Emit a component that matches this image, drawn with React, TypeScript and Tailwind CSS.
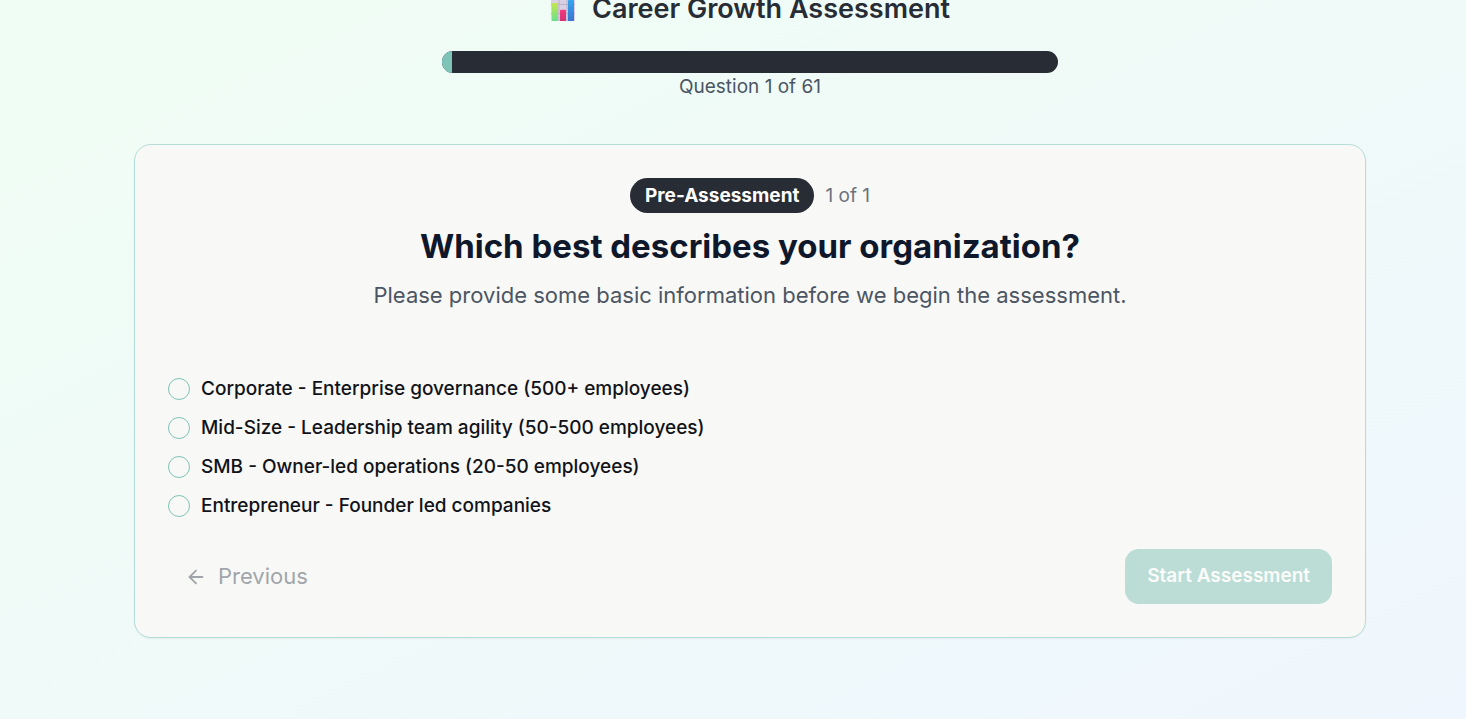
import { useState } from "react";

const total = 61;
const current = 1;

const options = [
  "Corporate - Enterprise governance (500+ employees)",
  "Mid-Size - Leadership team agility (50-500 employees)",
  "SMB - Owner-led operations (20-50 employees)",
  "Entrepreneur - Founder led companies",
];

function ChartIcon() {
  return (
    <svg viewBox="0 0 26 26" className="size-[26px] shrink-0" aria-hidden="true">
      <defs>
        <linearGradient id="green" x1="0" y1="0" x2="0" y2="1">
          <stop offset="0" stopColor="#c5e64d" />
          <stop offset="1" stopColor="#69e08d" />
        </linearGradient>
        <linearGradient id="pink" x1="0" y1="0" x2="0" y2="1">
          <stop offset="0" stopColor="#f4397d" />
          <stop offset="1" stopColor="#d43275" />
        </linearGradient>
        <linearGradient id="blue" x1="0" y1="0" x2="0" y2="1">
          <stop offset="0" stopColor="#35a5ee" />
          <stop offset="1" stopColor="#3b76cf" />
        </linearGradient>
      </defs>
      <rect x="1" y="1" width="24" height="24" rx="1" fill="#d9d0e3" />
      <path d="M1 8.500h24M1 17.500h24M9 1v24M17 1v24" stroke="#b6abc2" strokeWidth="0.8" />
      <rect x="2" y="7" width="6" height="18" rx="0.6" fill="url(#green)" />
      <path d="M10 25V15q0-1.200 1.200-1.200h3.600q1.200 0 1.200 1.200v10z" fill="url(#pink)" />
      <path d="M18 25V5q0-1.200 1.200-1.200h3.600q1.200 0 1.200 1.200v20z" fill="url(#blue)" />
    </svg>
  );
}

export default function App() {
  const [choice, setChoice] = useState<string | null>(null);

  return (
    <div className="min-h-screen overflow-hidden bg-linear-to-br from-[#f0fdf4] from-[5%] to-[#eff6ff] to-[112%] pl-[34px] font-['Inter',sans-serif]">
      <main className="mx-auto max-w-[1232px]">
        <header className="-mt-[11px] flex flex-col items-center">
          <h1 className="flex items-center gap-4 text-[27px] leading-10 font-semibold text-[#282c35]">
            <ChartIcon />
            Career Growth Assessment
          </h1>
          <div
            role="progressbar"
            aria-label="Assessment progress"
            aria-valuenow={current}
            aria-valuemin={0}
            aria-valuemax={total}
            className="mt-[22px] h-[22px] w-full max-w-[616px] overflow-hidden rounded-full bg-[#282c35]"
          >
            <div className="h-full bg-[#7fc4b8]" style={{ width: `${(current / total) * 100}%` }} />
          </div>
          <p className="text-[19px] leading-7 text-[#4b5563]">
            Question {current} of {total}
          </p>
        </header>

        <section className="mt-[43px] rounded-[17px] border border-[#b5ded8] bg-[#f8f8f6] p-[33px] shadow-xs">
          <div className="flex flex-col items-center text-center">
            <div className="flex items-center gap-[11px] text-[19px] leading-7">
              <span className="rounded-full bg-[#282c35] px-[15px] py-1 leading-[27px] font-bold text-white">
                Pre-Assessment
              </span>
              <span className="text-[#6b7280]">1 of 1</span>
            </div>
            <h2 className="mt-[11px] text-[33px] leading-11 font-bold text-[#0f172a]">
              Which best describes your organization?
            </h2>
            <p className="mt-[11px] text-[22px] leading-8 text-[#4b5563]">
              Please provide some basic information before we begin the assessment.
            </p>
          </div>

          <fieldset aria-label="Organization type" className="mt-16 flex flex-col gap-[11px]">
            {options.map((option) => (
              <label
                key={option}
                className="flex items-center gap-[11px] text-[19px] leading-7 font-medium text-[#111318]"
              >
                <input
                  type="radio"
                  name="organization"
                  value={option}
                  checked={choice === option}
                  onChange={() => setChoice(option)}
                  className="size-[22px] shrink-0 appearance-none rounded-full border border-[#7fc4b8] checked:border-[6px]"
                />
                {option}
              </label>
            ))}
          </fieldset>

          <div className="mt-[29px] flex items-center justify-between">
            <button
              type="button"
              disabled
              className="flex h-[55px] items-center gap-[11px] px-[17px] text-[22px] text-[#4b5563] opacity-50"
            >
              <svg
                viewBox="0 0 24 24"
                className="size-[22px]"
                fill="none"
                stroke="currentColor"
                strokeWidth="2"
                strokeLinecap="round"
                strokeLinejoin="round"
                aria-hidden="true"
              >
                <path d="m12 19-7-7 7-7" />
                <path d="M19 12H5" />
              </svg>
              Previous
            </button>
            <button
              type="button"
              disabled={choice === null}
              className="h-[55px] rounded-[14px] bg-[#7fc4b8] px-[22px] text-[19px] font-semibold text-white disabled:opacity-50"
            >
              Start Assessment
            </button>
          </div>
        </section>
      </main>
    </div>
  );
}
